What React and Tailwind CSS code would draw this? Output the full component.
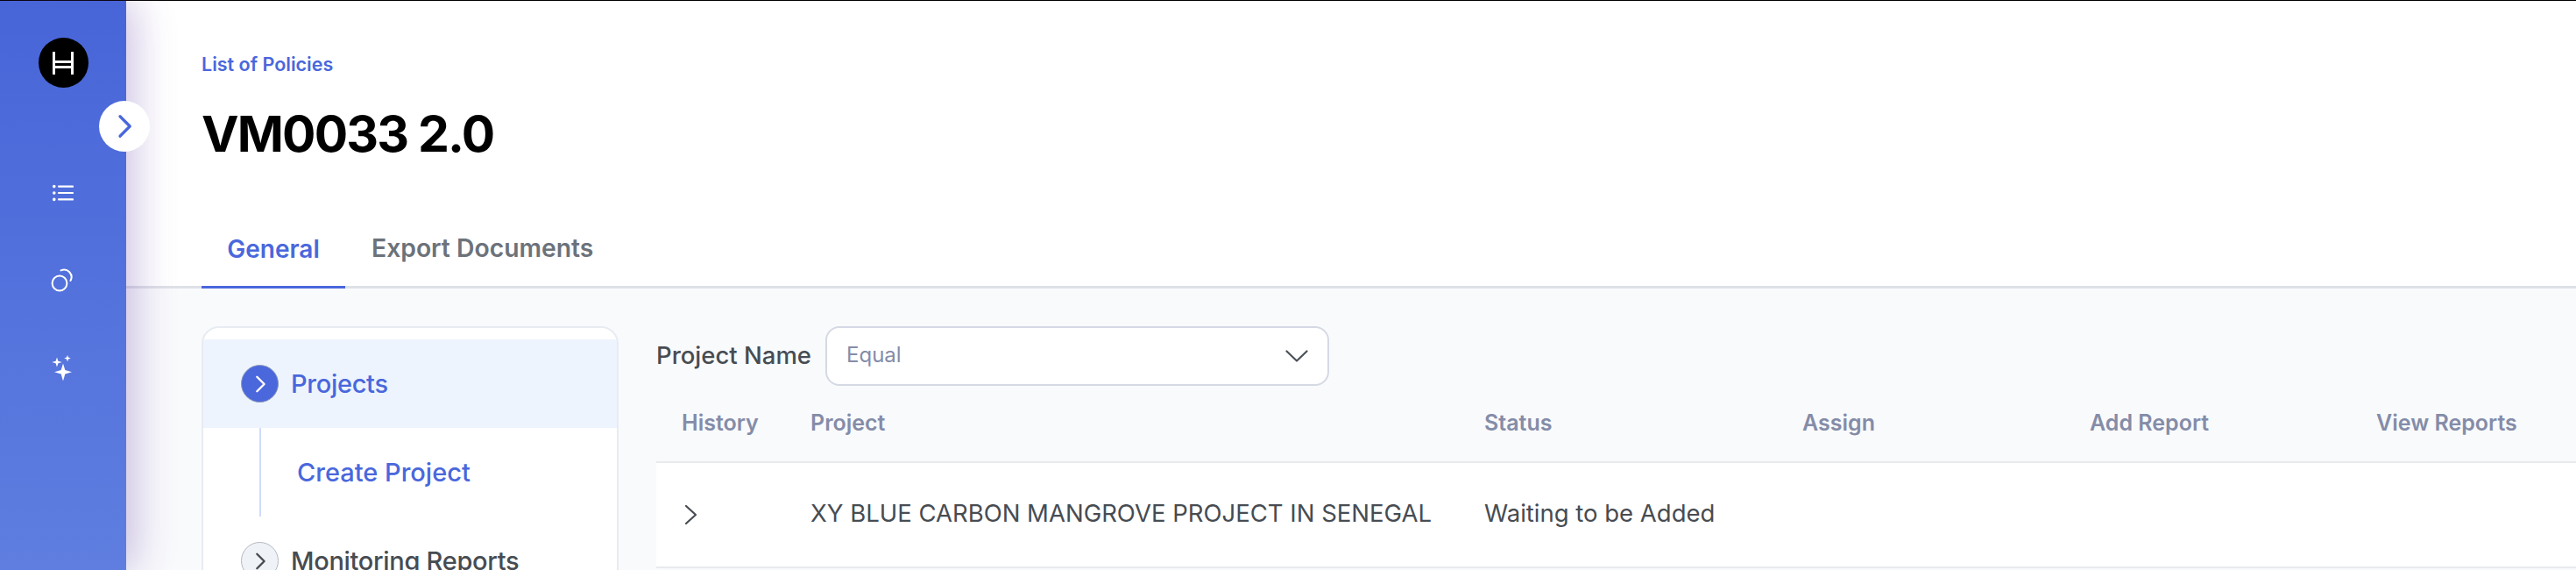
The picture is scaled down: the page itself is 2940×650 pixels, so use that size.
import React from 'react';

function ChevronRight({ className }) {
  return (
    <svg viewBox="0 0 24 24" fill="none" stroke="currentColor" strokeWidth="2.6" strokeLinecap="round" strokeLinejoin="round" className={className}>
      <path d="M8 3l9 9-9 9" />
    </svg>
  );
}

function HederaLogo() {
  return (
    <svg viewBox="0 0 24 26" className="w-6 h-[26px]" fill="#fff">
      <rect x="0" y="0" width="3" height="26" />
      <rect x="21" y="0" width="3" height="26" />
      <rect x="3" y="10" width="18" height="3" />
      <rect x="3" y="16" width="18" height="3" />
    </svg>
  );
}

function ListIcon() {
  return (
    <svg viewBox="0 0 24 20" className="w-6 h-5" fill="none" stroke="#fff" strokeWidth="2.2" strokeLinecap="round">
      <path d="M7 2.600h16M7 10h16M7 17.400h16" />
      <circle cx="1.800" cy="2.600" r="0.700" fill="#fff" />
      <circle cx="1.800" cy="10" r="0.700" fill="#fff" />
      <circle cx="1.800" cy="17.400" r="0.700" fill="#fff" />
    </svg>
  );
}

function CirclesIcon() {
  return (
    <svg viewBox="0 0 28 28" className="w-7 h-7 -mt-[2px]" fill="none" stroke="#fff" strokeWidth="2" strokeLinecap="round">
      <circle cx="10" cy="18" r="8.400" />
      <path d="M11.500 3.400a8.400 8.400 0 0 1 11 11.600" />
    </svg>
  );
}

function SparklesIcon() {
  return (
    <svg viewBox="0 0 26 30" className="w-[26px] h-[30px]" fill="#fff">
      <path d="M13 9.500L15.300 17 23 19.300 15.300 21.600 13 29.500 10.700 21.600 3 19.300 10.700 17z" />
      <path d="M6 2.500L7.400 6.700 11.700 8 7.400 9.300 6 13.500 4.600 9.300.3 8 4.600 6.700z" />
      <path d="M18 0L19 2.600 21.800 3.600 19 4.600 18 7.500 17 4.600 14.200 3.600 17 2.600z" />
    </svg>
  );
}

function Sidebar() {
  return (
    <aside className="relative z-10 w-[144px] shrink-0 h-full flex flex-col items-center pt-[42px] bg-gradient-to-b from-[#4865d8] to-[#5f7ee0] shadow-[8px_0_48px_rgba(90,50,160,0.32)]">
      <div className="w-[57px] h-[57px] rounded-full bg-black flex items-center justify-center">
        <HederaLogo />
      </div>
      <div className="mt-[70px] h-[100px] flex items-center justify-center"><ListIcon /></div>
      <div className="h-[100px] flex items-center justify-center"><CirclesIcon /></div>
      <div className="h-[100px] flex items-center justify-center"><SparklesIcon /></div>
      <button className="absolute top-[114px] left-[113px] w-[58px] h-[58px] rounded-full bg-white flex items-center justify-center text-[#4a67dc]">
        <ChevronRight className="w-[30px] h-[30px]" />
      </button>
    </aside>
  );
}

function NavRow({ label, active }) {
  return (
    <div className={`h-[101px] flex items-center pl-[43px] gap-[14px] ${active ? 'bg-[#edf4fd]' : ''}`}>
      <span className={`w-[43px] h-[43px] rounded-full flex items-center justify-center border ${active ? 'bg-[#4a67dc] text-white border-[#8b96b8]' : 'bg-[#eff2f7] text-[#474c52] border-[#b4b8c0]'}`}>
        <ChevronRight className="w-[22px] h-[22px]" />
      </span>
      <span className={`text-[29px] tracking-[-0.3px] font-medium ${active ? 'text-[#4a67dc]' : 'text-[#474c52]'}`}>{label}</span>
    </div>
  );
}

const columns = ['History', 'Project', 'Status', 'Assign', 'Add Report', 'View Reports'];

export default function App() {
  return (
    <div className="h-[650px] w-full overflow-hidden flex flex-col bg-white font-['Inter',sans-serif]">
      <div className="h-px bg-black shrink-0"></div>
      <div className="flex flex-1 min-h-0">
        <Sidebar />
        <main className="flex-1 min-w-0 flex flex-col">
          <header className="bg-white border-b-[3px] border-[#dfe1e8] pl-[86px] pt-[60px]">
            <a className="block text-[21.500px] leading-6 font-semibold text-[#4a67dc]">List of Policies</a>
            <h1 className="mt-[33px] text-[57px] leading-[70px] tracking-[-1.800px] font-bold text-black">VM0033 2.0</h1>
            <div className="mt-[50px] flex -mb-[3px]">
              <div className="h-[91px] w-[164px] pt-[3px] flex items-center justify-center border-b-[3px] border-[#4a67dc] text-[28px] font-semibold text-[#4a67dc]">General</div>
              <div className="h-[91px] px-[30px] pt-[3px] flex items-center border-b-[3px] border-transparent text-[28.300px] font-semibold text-[#6c727a]">Export Documents</div>
            </div>
          </header>
          <section className="flex-1 min-h-0 bg-[#f9fafc] flex pl-[86px] pt-[43px] gap-[43px]">
            <nav className="w-[476px] shrink-0 self-start bg-white border-2 border-[#e8ebf2] rounded-t-[20px] pt-[13px]">
              <NavRow label="Projects" active />
              <div className="h-[101px] ml-[64px] pl-[41px] border-l-2 border-[#cfdbf8] flex items-center text-[29px] font-medium text-[#4a67dc]">Create Project</div>
              <NavRow label="Monitoring Reports" />
            </nav>
            <div className="flex-1 min-w-0">
              <div className="flex items-center gap-[16px]">
                <label className="text-[27.500px] font-medium text-[#474c52]">Project Name</label>
                <div className="w-[575px] h-[68px] bg-white border-2 border-[#d5d9e4] rounded-[16px] flex items-center justify-between pl-[22px] pr-[22px]">
                  <span className="text-[24px] text-[#848ca8] -mt-[2px]">Equal</span>
                  <svg viewBox="0 0 26 14" className="w-[26px] h-[14px]" fill="none" stroke="#4b5157" strokeWidth="2.2" strokeLinecap="round" strokeLinejoin="round"><path d="M1.500 1.500L13 12.500 24.500 1.500" /></svg>
                </div>
              </div>
              <div className="grid grid-cols-[147px_769px_363px_328px_327px_1fr] pl-[29px] h-[88px] items-center border-b-2 border-[#e8eaee] text-[25px] font-semibold text-[#848ca8]">
                {columns.map((c) => <div key={c}>{c}</div>)}
              </div>
              <div className="grid grid-cols-[147px_769px_363px_328px_327px_1fr] pl-[29px] h-[120px] items-center bg-white border-b-2 border-[#e8eaee] text-[27.500px] text-[#474c52]">
                <div className="pl-[2px]">
                  <svg viewBox="0 0 16 24" className="w-4 h-6" fill="none" stroke="#474c52" strokeWidth="2.2" strokeLinecap="round" strokeLinejoin="round"><path d="M3 2l11 10-11 10" /></svg>
                </div>
                <div className="-mt-[2px]">XY BLUE CARBON MANGROVE PROJECT IN SENEGAL</div>
                <div className="-mt-[2px]">Waiting to be Added</div>
                <div></div>
                <div></div>
                <div></div>
              </div>
            </div>
          </section>
        </main>
      </div>
    </div>
  );
}
